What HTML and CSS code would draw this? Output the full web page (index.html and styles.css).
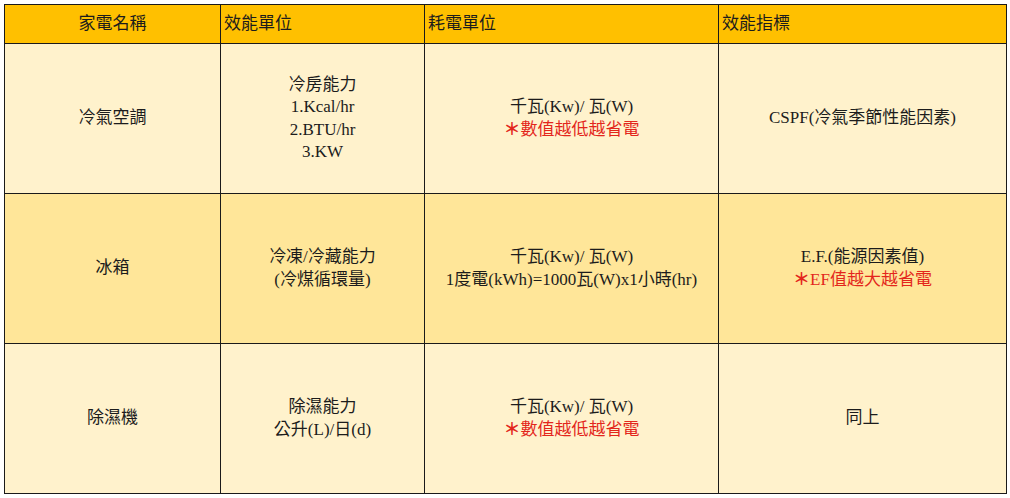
FILE: index.html
```html
<!DOCTYPE html>
<html lang="zh-Hant">
<head>
<meta charset="utf-8">
<title>家電效能</title>
<link rel="stylesheet" href="styles.css">
</head>
<body>
<table class="grid">
  <colgroup>
    <col class="c1"><col class="c2"><col class="c3"><col class="c4">
  </colgroup>
  <thead>
    <tr class="head">
      <th class="center">家電名稱</th>
      <th>效能單位</th>
      <th>耗電單位</th>
      <th>效能指標</th>
    </tr>
  </thead>
  <tbody>
    <tr class="light">
      <td>冷氣空調</td>
      <td>冷房能力<br>1.Kcal/hr<br>2.BTU/hr<br>3.KW</td>
      <td>千瓦(Kw)/ 瓦(W)<br><span class="red"><span class="star">＊</span>數值越低越省電</span></td>
      <td>CSPF(冷氣季節性能因素)</td>
    </tr>
    <tr class="mid">
      <td>冰箱</td>
      <td>冷凍/冷藏能力<br>(冷煤循環量)</td>
      <td>千瓦(Kw)/ 瓦(W)<br>1度電(kWh)=1000瓦(W)x1小時(hr)</td>
      <td>E.F.(能源因素值)<br><span class="red"><span class="star">＊</span>EF值越大越省電</span></td>
    </tr>
    <tr class="light">
      <td>除濕機</td>
      <td>除濕能力<br>公升(L)/日(d)</td>
      <td>千瓦(Kw)/ 瓦(W)<br><span class="red"><span class="star">＊</span>數值越低越省電</span></td>
      <td>同上</td>
    </tr>
  </tbody>
</table>
</body>
</html>
```

FILE: styles.css
```css
html, body {
  margin: 0;
  padding: 0;
  background: #ffffff;
}
body {
  padding: 4px 0 0 4px;
  font-family: "Liberation Serif", "Noto Sans CJK TC", serif;
  font-size: 17px;
  color: #1c1c1c;
}
.grid {
  border-collapse: collapse;
  table-layout: fixed;
  width: 1002px;
}
.c1 { width: 216px; }
.c2 { width: 204px; }
.c3 { width: 294px; }
.c4 { width: 288px; }
.grid th, .grid td {
  border: 1px solid #1a1a1a;
  padding: 0 3px;
  line-height: 22.5px;
}
.head th {
  height: 37px;
  background: #ffc000;
  font-weight: normal;
  text-align: left;
  vertical-align: middle;
  padding-top: 1px;
}
.head th.center {
  text-align: center;
}
.grid td {
  height: 149px;
  text-align: center;
  vertical-align: middle;
}
.light td { background: #fff2cc; }
.mid td { background: #ffe699; }
.red { color: #e3261c; }
.star { font-weight: bold; }
```
